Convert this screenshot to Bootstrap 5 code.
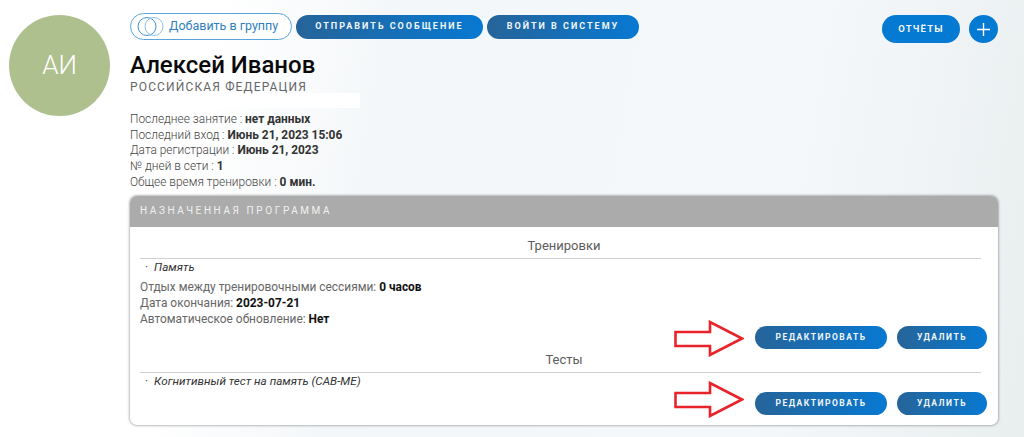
<!DOCTYPE html>
<html lang="ru">
<head>
  <meta charset="UTF-8" />
  <meta name="viewport" content="width=device-width, initial-scale=1.0" />
  <title>Алексей Иванов</title>
  <link href="https://cdn.jsdelivr.net/npm/bootstrap@5.3.0/dist/css/bootstrap.min.css" rel="stylesheet"/>
  <style>
    html, body { height: 437px; overflow: hidden; }
    body {
      font-family: Roboto, "Liberation Sans", sans-serif;
      font-size: 12px;
      color: #444;
      background:
        linear-gradient(#fff, #fff) 0 93px / 360px 15px no-repeat,
        linear-gradient(100deg, #fff 0, #fff 20%, #f4f7f9 36%, #f5f8fa 75%, #e9eeef 100%);
    }
    .page-wrap { padding: 13px 26px 0 9px; }
    .avatar-col { width: 121px; padding-top: 2px; }
    .avatar-circle {
      width: 101px; height: 101px; border-radius: 50%;
      background: #afc08f; color: #fff; font-size: 26px; font-weight: 300;
    }
    .pill-btn {
      height: 24px; border: 0; border-radius: 12px; padding: 0;
      color: #f2f6fa; font-size: 9px; font-weight: 700; letter-spacing: 2px;
      background: linear-gradient(90deg, #266499, #0779d2);
    }
    .pill-send { width: 187px; }
    .pill-login { width: 152px; }
    .pill-group {
      width: 162px; height: 27px; border-radius: 14px; padding: 0 0 0 6px;
      border: 1.5px solid #5aa4dc; background: #fff; color: #2f7fbe;
      font-size: 12.5px; column-gap: 5px;
    }
    .pill-report {
      width: 78px; height: 28px; border: 0; border-radius: 14px; padding: 0;
      background: #057ad3; color: #f2f6fa; font-size: 9.5px; font-weight: 700; letter-spacing: 1.2px;
    }
    .round-plus {
      width: 29px; height: 28px; border: 0; border-radius: 50%; padding: 0;
      background: #057ad3; margin-left: 9px;
    }
    .user-name { font-size: 24px; font-weight: 500; color: #0a0a0a; line-height: 28px; margin: 8px 0 0; }
    .user-country { font-size: 12px; letter-spacing: 1.15px; color: #666; line-height: 14px; margin-top: 1px; }
    .user-stats { font-size: 11.9px; font-weight: 300; line-height: 15.7px; margin-top: 18px; color: #444; }
    .user-stats b { color: #333; font-weight: 700; }
    .program-box {
      margin-top: 5px; height: 229px; border: 0; border-radius: 7px; overflow: hidden;
      background: #fff; box-shadow: 0 0 3px rgba(0,0,0,.55);
    }
    .program-head {
      height: 31px; background: #ababab; color: #f1f1f1; padding: 0 10px;
      font-size: 10px; letter-spacing: 2.6px; line-height: 30px;
    }
    .program-body { padding: 0 11px 0 10px; position: relative; color: #666; }
    .section-title { text-align: center; font-size: 13px; color: #5c5c5c; line-height: 16px; padding-left: 7px; width: 841px; border-bottom: 1px solid #cfcfcf; }
    .item-name { font-style: italic; color: #333; font-size: 11.7px; line-height: 16px; padding-left: 5px; }
    .item-dot { margin-right: 6px; font-style: normal; }
    .item-meta { line-height: 16px; margin-top: 4px; font-size: 11.9px; }
    .item-meta b { color: #111; font-weight: 700; }
    .pill-edit { width: 132px; height: 23px; font-size: 8.5px; letter-spacing: 1.5px; }
    .pill-del { width: 90px; height: 23px; font-size: 8.5px; letter-spacing: 1.5px; }
    .btn-pair { column-gap: 10px; }
    .hint-arrow { position: absolute; left: 544px; width: 70px; height: 37px; }
  </style>
</head>
<body>
  <div class="page-wrap d-flex">
    <div class="avatar-col flex-shrink-0">
      <div class="avatar-circle d-flex align-items-center justify-content-center">АИ</div>
    </div>
    <div class="flex-grow-1">
      <div class="d-flex align-items-start justify-content-between">
        <div class="d-flex align-items-center" style="gap:4px">
          <button class="btn pill-group d-flex align-items-center">
            <svg width="27" height="21" viewBox="0 0 27 21" fill="none" stroke-width="1"><circle cx="10" cy="10.5" r="9" stroke="#3f93d6"/><circle cx="17" cy="10.5" r="9" stroke="#8cc0e8"/></svg>
            <span>Добавить в группу</span>
          </button>
          <button class="btn pill-btn pill-send">ОТПРАВИТЬ СООБЩЕНИЕ</button>
          <button class="btn pill-btn pill-login">ВОЙТИ В СИСТЕМУ</button>
        </div>
        <div class="d-flex" style="margin-top:2px">
          <button class="btn pill-report">ОТЧЁТЫ</button>
          <button class="btn round-plus d-flex align-items-center justify-content-center">
            <svg width="15" height="15" viewBox="0 0 15 15" stroke="#fff" stroke-width="1.4"><path d="M7.5 1v13M1 7.5h13"/></svg>
          </button>
        </div>
      </div>
      <h1 class="user-name">Алексей Иванов</h1>
      <div class="user-country">РОССИЙСКАЯ ФЕДЕРАЦИЯ</div>
      <div class="user-stats">
        <div>Последнее занятие : <b>нет данных</b></div>
        <div>Последний вход : <b>Июнь 21, 2023 15:06</b></div>
        <div>Дата регистрации : <b>Июнь 21, 2023</b></div>
        <div>№ дней в сети : <b>1</b></div>
        <div>Общее время тренировки : <b>0 мин.</b></div>
      </div>
      <div class="program-box">
        <div class="program-head">НАЗНАЧЕННАЯ ПРОГРАММА</div>
        <div class="program-body">
          <div class="section-title" style="padding-top:11px;padding-bottom:4px">Тренировки</div>
          <div class="item-name"><span class="item-dot">·</span>Память</div>
          <div class="item-meta">
            <div>Отдых между тренировочными сессиями: <b>0 часов</b></div>
            <div>Дата окончания: <b>2023-07-21</b></div>
            <div>Автоматическое обновление: <b>Нет</b></div>
          </div>
          <div class="d-flex justify-content-end btn-pair" style="margin-top:-1px">
            <button class="btn pill-btn pill-edit">РЕДАКТИРОВАТЬ</button>
            <button class="btn pill-btn pill-del">УДАЛИТЬ</button>
          </div>
          <div class="section-title" style="padding-top:3px;padding-bottom:4px">Тесты</div>
          <div class="item-name"><span class="item-dot">·</span>Когнитивный тест на память (CAB-ME)</div>
          <div class="d-flex justify-content-end btn-pair" style="margin-top:3px">
            <button class="btn pill-btn pill-edit">РЕДАКТИРОВАТЬ</button>
            <button class="btn pill-btn pill-del">УДАЛИТЬ</button>
          </div>
          <svg class="hint-arrow" style="top:93px" viewBox="0 0 70 37" fill="#fff" stroke="#e8232a" stroke-width="2.6"><path d="M1.5 12H36V2L68 18.500 36 35V26H1.500z"/></svg>
          <svg class="hint-arrow" style="top:154px" viewBox="0 0 70 37" fill="#fff" stroke="#e8232a" stroke-width="2.6"><path d="M1.5 12H36V2L68 18.500 36 35V26H1.500z"/></svg>
        </div>
      </div>
    </div>
  </div>
</body>
</html>
